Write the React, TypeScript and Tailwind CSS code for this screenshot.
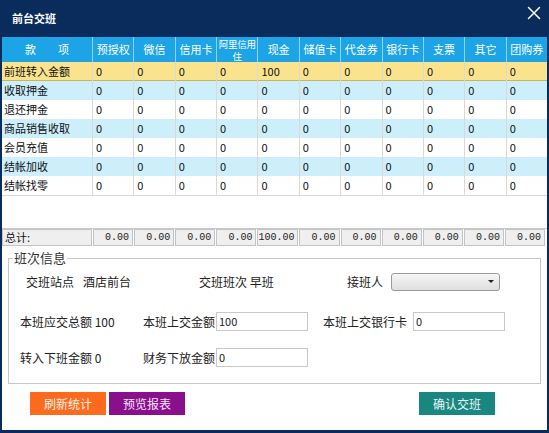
import React from "react";
import { X } from "lucide-react";

const columns = ["预授权", "微信", "信用卡", "阿里信用住", "现金", "储值卡", "代金券", "银行卡", "支票", "其它", "团购券"];

const rows: { name: string; values: string[]; tone: "sel" | "blue" | "white" }[] = [
  { name: "前班转入金额", values: ["0", "0", "0", "0", "100", "0", "0", "0", "0", "0", "0"], tone: "sel" },
  { name: "收取押金", values: Array(11).fill("0"), tone: "blue" },
  { name: "退还押金", values: Array(11).fill("0"), tone: "white" },
  { name: "商品销售收取", values: Array(11).fill("0"), tone: "blue" },
  { name: "会员充值", values: Array(11).fill("0"), tone: "white" },
  { name: "结帐加收", values: Array(11).fill("0"), tone: "blue" },
  { name: "结帐找零", values: Array(11).fill("0"), tone: "white" },
];

const totals = ["0.00", "0.00", "0.00", "0.00", "100.00", "0.00", "0.00", "0.00", "0.00", "0.00", "0.00"];

const toneClass = {
  sel: "bg-[#fbe38e] border-b border-[#c9b466]",
  blue: "bg-[#cdeefb]",
  white: "bg-white",
};

const TextBox: React.FC<{ value: string; className?: string }> = ({ value, className }) => (
  <div
    className={`h-[19px] w-[92px] border border-[#c9c9c9] bg-white pl-[2px] text-[11px] leading-[17px] text-[#222] ${className ?? ""}`}
  >
    {value}
  </div>
);

export default function App() {
  return (
    <div
      className="flex h-[433px] w-[549px] flex-col bg-[#0a2c5c] text-[12px]"
      style={{ fontFamily: '"Noto Sans CJK SC", "Noto Sans", sans-serif' }}
    >
      {/* title bar */}
      <div className="flex h-[37px] items-center justify-between pl-[12px] pr-[4px]">
        <span className="text-[11px] font-bold text-white">前台交班</span>
        <X size={22} strokeWidth={1.6} className="-mt-[12px] text-white" />
      </div>

      <div className="mx-[2px] flex h-[393px] flex-col bg-white">
        {/* grid */}
        <div className="flex h-[191px] flex-col">
          <div className="grid h-[25px] grid-cols-[90px_repeat(11,1fr)] bg-[#1ca4e6] text-white">
            <div className="flex items-center justify-center gap-[22px] text-[11px]">
              <span>款</span>
              <span>项</span>
            </div>
            {columns.map((c) =>
              c === "阿里信用住" ? (
                <div
                  key={c}
                  className="flex flex-col items-center justify-center border-l border-[#8fd3f4] text-[9.5px] leading-[12px] tracking-[-0.2px]"
                >
                  <span className="whitespace-nowrap">阿里信用</span>
                  <span>住</span>
                </div>
              ) : (
                <div
                  key={c}
                  className="flex items-center justify-center border-l border-[#8fd3f4] text-[11px] leading-[11px]"
                >
                  {c}
                </div>
              )
            )}
          </div>
          {rows.map((r) => (
            <div
              key={r.name}
              className={`grid h-[19px] grid-cols-[90px_repeat(11,1fr)] text-[11px] leading-[19px] text-[#111] ${toneClass[r.tone]}`}
            >
              <div className="truncate pl-[2px]">{r.name}</div>
              {r.values.map((v, i) => (
                <div key={i} className="border-l border-[#d9d9d9] pl-[3px]">
                  {v}
                </div>
              ))}
            </div>
          ))}
          <div className="border-t border-[#d8d8d8]" />
        </div>

        {/* totals */}
        <div className="grid h-[17px] grid-cols-[90px_repeat(11,1fr)] gap-x-[1px] border-t border-[#c8c8c8] pr-[2px] text-[11px] leading-[15px]">
          <div className="border border-[#c4c4c4] bg-[#efefef] pl-[2px] text-[#111]">总计:</div>
          {totals.map((t, i) => (
            <div
              key={i}
              className="border border-[#c4c4c4] bg-[#efefef] pr-[3px] text-right text-[10px] text-[#222]"
              style={{ fontFamily: '"Liberation Mono", monospace' }}
            >
              {t}
            </div>
          ))}
        </div>

        {/* shift info */}
        <fieldset className="mx-[6px] mt-[4px] h-[135px] border border-[#c6c6c6] text-[#222]">
          <legend className="ml-[4px] px-[1px] text-[13px] leading-[18px] text-[#333]">班次信息</legend>
          <div className="mt-[5px] flex h-[19px] items-center">
            <div className="w-[181px] pl-[17px]">
              交班站点<span className="ml-[9px]">酒店前台</span>
            </div>
            <div className="w-[157px] pl-[9px]">交班班次 早班</div>
            <span>接班人</span>
            <div className="ml-[8px] flex h-[18px] w-[109px] items-center justify-end rounded-[3px] border border-[#9a9a9a] bg-gradient-to-b from-[#f6f6f6] to-[#dedede] pr-[5px]">
              <span className="h-0 w-0 border-l-[3px] border-r-[3px] border-t-[3px] border-l-transparent border-r-transparent border-t-[#222]" />
            </div>
          </div>
          <div className="mt-[21px] flex h-[19px] items-center">
            <div className="w-[134px] pl-[11px]">本班应交总额 100</div>
            <span className="w-[73px]">本班上交金额</span>
            <TextBox value="100" />
            <span className="ml-[15px] w-[90px]">本班上交银行卡</span>
            <TextBox value="0" />
          </div>
          <div className="mt-[17px] flex h-[19px] items-center">
            <div className="w-[134px] pl-[11px]">转入下班金额 0</div>
            <span className="w-[73px]">财务下放金额</span>
            <TextBox value="0" />
          </div>
        </fieldset>

        {/* actions */}
        <div className="mt-[8px] flex h-[23px] items-stretch pl-[28px] pr-[52px] text-[12px]">
          <button className="w-[76px] bg-[#fd6a1e] text-[#fff1e6]">刷新统计</button>
          <button className="ml-[3px] w-[76px] bg-[#8a0f8c] text-[#f3e6f6]">预览报表</button>
          <button className="ml-auto w-[76px] bg-[#19877f] text-[#e9f6f5]">确认交班</button>
        </div>
      </div>
    </div>
  );
}
